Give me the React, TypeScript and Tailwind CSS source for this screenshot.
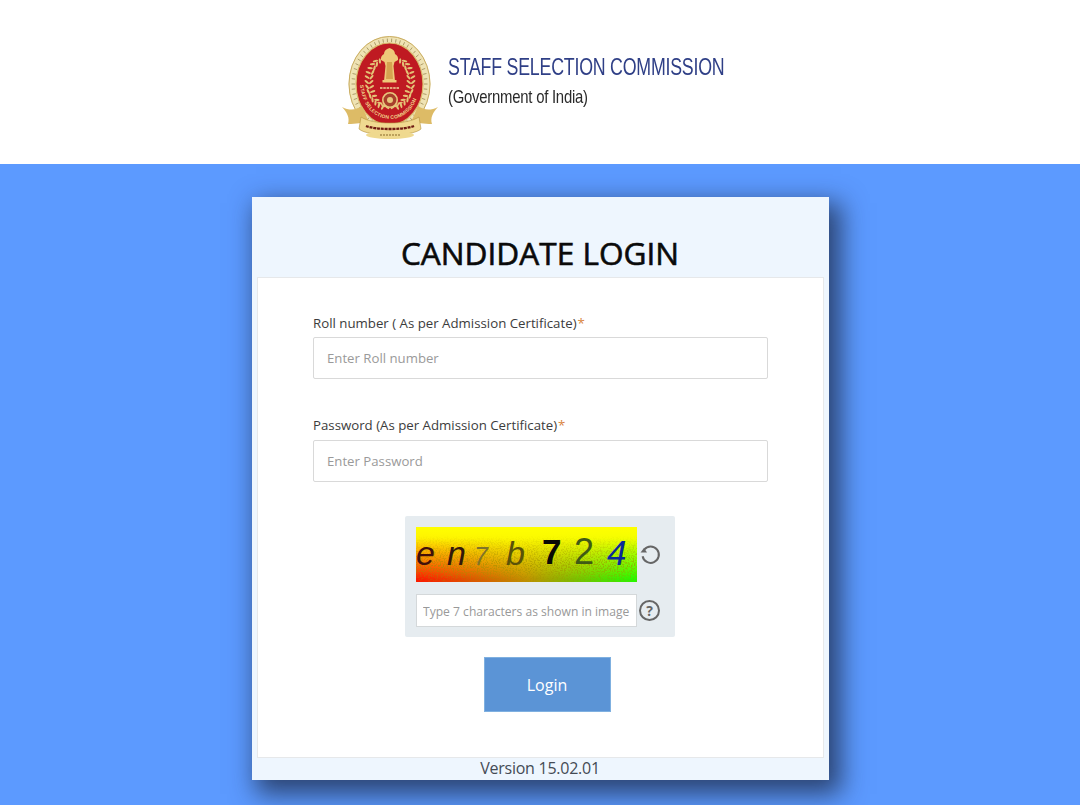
import React from "react";

function Emblem() {
  const leaves = [];
  for (let i = 0; i < 13; i++) {
    const t = i / 12;
    const a = Math.PI * (0.5 + 0.08 + t * 0.72);
    const x = 50 + Math.cos(a) * 21;
    const y = 52 + Math.sin(a) * 26;
    const r = (a * 180) / Math.PI;
    for (const s of [-1, 1]) {
      const lx = s === -1 ? x : 100 - x;
      leaves.push(
        <ellipse key={`${i}${s}a`} cx={lx - s * 2.2} cy={y} rx="2.8" ry="1.1" fill="#e4c377" transform={`rotate(${s * (r + 40)} ${lx - s * 2.2} ${y})`} />
      );
      leaves.push(
        <ellipse key={`${i}${s}b`} cx={lx + s * 2.2} cy={y} rx="2.8" ry="1.1" fill="#e4c377" transform={`rotate(${s * (r - 40)} ${lx + s * 2.2} ${y})`} />
      );
    }
  }
  const ticks = [];
  for (let i = 0; i < 54; i++) {
    const a = (Math.PI * 2 * i) / 54;
    const cx = 49.5, cy = 54;
    ticks.push(
      <line key={i} x1={cx + Math.cos(a) * 34.5} y1={cy + Math.sin(a) * 42} x2={cx + Math.cos(a) * 38} y2={cy + Math.sin(a) * 45.5} stroke="#9c8a55" strokeWidth="0.8" />
    );
  }
  return (
    <svg width="100" height="112" viewBox="0 0 100 112" className="block">
      <defs>
        <path id="arc" d="M20 54 C22 78 36 89 50 89 C64 89 78 78 80 54" fill="none" />
      </defs>
      <ellipse cx="49.5" cy="54" rx="41" ry="48" fill="#efe3b4" />
      <ellipse cx="49.5" cy="54" rx="40.5" ry="47.5" fill="none" stroke="#c9ac62" strokeWidth="1" />
      {ticks}
      <ellipse cx="49.5" cy="54" rx="33.5" ry="41" fill="#bf1a22" stroke="#d9b96a" strokeWidth="1.2" />
      {leaves}
      <path d="M44 24c0-3 2-5 5.5-6 3.5 1 5.5 3 5.5 6 2 1 3.5 3 3 6l-3.5 2-1 4 1.5 15H44l1.5-15-1-4-3.5-2c-.5-3 1-5 3-6z" fill="#eec979" />
      <rect x="42.5" y="50" width="14" height="2.5" fill="#eec979" />
      <path d="M47 32h5l1 17h-7z" fill="#c98f3a" opacity="0.65" />
      <path d="M40 58h19" stroke="#f0d79a" strokeWidth="1.3" strokeDasharray="2.5 .8" />
      <circle cx="50" cy="70" r="7.2" fill="#a8402c" stroke="#e8c77c" strokeWidth="1.6" />
      <circle cx="50" cy="70" r="3" fill="#e8c77c" />
      <text fontFamily="'Liberation Sans', sans-serif" fontSize="5" fontWeight="700" fill="#f1d68d" letterSpacing="0.2">
        <textPath href="#arc" startOffset="1%">STAFF SELECTION COMMISSION</textPath>
      </text>
      <path d="M2 77c8 4 14 3 20-1l6 14c-5 3-12 4-20 4 2-6-1-12-6-17z" fill="#ddbb66" />
      <path d="M98 77c-8 4-14 3-20-1l-6 14c5 3 12 4 20 4-2-6 1-12 6-17z" fill="#ddbb66" />
      <path d="M21 87c12 8 46 8 58 0l2 12c-9 8-53 8-62 0z" fill="#f0d990" stroke="#b4923f" strokeWidth="0.6" />
      <path d="M26 96c10 4 38 4 48 0" fill="none" stroke="#6e1a12" strokeWidth="2.4" strokeDasharray="3 .8" />
      <ellipse cx="50" cy="105" rx="24" ry="4" fill="#efd98f" />
      <path d="M40 105h20" stroke="#8a6a2a" strokeWidth="1.2" strokeDasharray="2 1" />
    </svg>
  );
}

function Captcha() {
  return (
    <svg width="221" height="55" viewBox="0 0 221 55" className="block">
      <defs>
        <linearGradient id="lr" x1="0" x2="1" y1="0" y2="0">
          <stop offset="0" stopColor="#ff1500" />
          <stop offset="0.5" stopColor="#c09000" />
          <stop offset="1" stopColor="#20ff00" />
        </linearGradient>
        <linearGradient id="tb" x1="0" x2="0" y1="0" y2="1">
          <stop offset="0" stopColor="#ffff00" stopOpacity="1" />
          <stop offset="0.2" stopColor="#ffff00" stopOpacity="0.95" />
          <stop offset="0.95" stopColor="#ffff00" stopOpacity="0" />
        </linearGradient>
        <filter id="grain" x="0" y="0" width="100%" height="100%">
          <feTurbulence type="fractalNoise" baseFrequency="0.7" numOctaves="2" seed="4" />
          <feColorMatrix values="0 0 0 0 0.35  0 0 0 0 0.28  0 0 0 0 0  0 0 0 5 -2.3" />
        </filter>
        <linearGradient id="fade" x1="0" x2="0" y1="0" y2="1">
          <stop offset="0.15" stopColor="#000" />
          <stop offset="0.7" stopColor="#ccc" />
          <stop offset="1" stopColor="#444" />
        </linearGradient>
        <mask id="m">
          <rect width="221" height="55" fill="url(#fade)" />
        </mask>
      </defs>
      <rect width="221" height="55" fill="url(#lr)" />
      <rect width="221" height="55" fill="url(#tb)" />
      <rect width="221" height="55" filter="url(#grain)" mask="url(#m)" opacity="0.75" />
      <g fontFamily="'Liberation Sans', sans-serif" fontStyle="italic">
        <text x="0" y="38" fontSize="34" fill="#42100a">e</text>
        <text x="31" y="38" fontSize="34" fill="#33180a">n</text>
        <text x="58" y="38" fontSize="25" fill="#807428">7</text>
        <text x="90" y="38" fontSize="34" fill="#5a5208">b</text>
        <text x="126" y="37" fontSize="35" fontWeight="700" fontStyle="normal" fill="#0a0a05">7</text>
        <text x="158" y="37" fontSize="36" fontStyle="normal" fill="#3f5a15">2</text>
        <text x="191" y="38" fontSize="35" fill="#0a2a9a">4</text>
      </g>
    </svg>
  );
}

function Field({ label, placeholder, gap, inputGap }: { label: string; placeholder: string; gap: string; inputGap: string }) {
  return (
    <div className={gap}>
      <div className="h-[18px] pl-[0.5px] text-[13.25px] leading-[18px] text-[#3c3c3c]">
        {label}
        <span className="ml-[1px] text-[#d9853f]">*</span>
      </div>
      <input
        placeholder={placeholder}
        className={`${inputGap} block h-[42px] w-full rounded-[2px] border border-[#d9d9d9] bg-white px-[13.5px] text-[13.2px] text-[#555] outline-none placeholder:text-[#9a9a9a]`}
      />
    </div>
  );
}

export default function App() {
  return (
    <div className="h-[805px] overflow-hidden bg-[#5c9aff] font-['Open_Sans',sans-serif]">
      <header className="flex h-[164px] items-start bg-white pl-[340px] pt-[30px]">
        <Emblem />
        <div className="ml-[8px] pt-[23px] font-['Liberation_Sans',sans-serif]">
          <div className="origin-left scale-x-[0.757] whitespace-nowrap text-[23.5px] leading-[28px] tracking-[-0.3px] text-[#2f3f86]">
            STAFF SELECTION COMMISSION
          </div>
          <div className="mt-[3px] origin-left scale-x-[0.805] whitespace-nowrap text-[18.5px] leading-[26px] tracking-[-0.3px] text-[#2a2a2a]">
            (Government of India)
          </div>
        </div>
      </header>

      <main className="mx-auto mt-[33px] w-[577px] bg-[#eef6fe] shadow-[8px_10px_24px_4px_rgba(25,35,60,0.72)]">
        <h1 className="h-[80px] pt-[35px] text-center text-[31.6px] leading-[42px] font-normal text-[#0a0a0a] [-webkit-text-stroke:0.6px_#0a0a0a]">
          CANDIDATE LOGIN
        </h1>
        <div className="mx-[5px] h-[481px] border border-[#e6e8ea] bg-white px-[55px] pt-[36px]">
          <Field label="Roll number ( As per Admission Certificate)" placeholder="Enter Roll number" gap="" inputGap="mt-[5px]" />
          <Field label="Password (As per Admission Certificate)" placeholder="Enter Password" gap="mt-[37px]" inputGap="mt-[6px]" />

          <div className="mx-auto mt-[34px] h-[121px] w-[270px] rounded-[2px] bg-[#e6ecf0] pl-[11px] pt-[11px]">
            <div className="flex items-center">
              <Captcha />
              <svg width="24" height="24" viewBox="0 0 24 24" fill="none" stroke="#666" strokeWidth="2" className="mb-[2px] ml-[1px]">
                <path d="M6.2 7.6a8.2 8.2 0 1 1-1.6 6.6" />
                <path d="M2.5 10.5h6.5L6 6z" fill="#666" stroke="none" />
              </svg>
            </div>
            <div className="mt-[12px] flex items-center">
              <input
                placeholder="Type 7 characters as shown in image"
                className="block h-[33px] w-[221px] border border-[#d4d8da] bg-white pl-[6px] pr-[2px] pt-[1px] text-[12.1px] outline-none placeholder:text-[#999]"
              />
              <div className="ml-[2px] flex h-[21px] w-[21px] items-center justify-center rounded-full border-2 border-[#666] text-[14px] leading-none font-bold text-[#666]">
                ?
              </div>
            </div>
          </div>

          <div className="mt-[20px] pl-[171px]">
            <button className="h-[55px] w-[127px] border border-[#7fb0e0] bg-[#5b94d6] text-[16px] text-white">
              Login
            </button>
          </div>
        </div>
        <div className="h-[22px] text-center text-[16px] leading-[20px] tracking-[-0.25px] text-[#444b55]">
          Version 15.02.01
        </div>
      </main>
    </div>
  );
}
